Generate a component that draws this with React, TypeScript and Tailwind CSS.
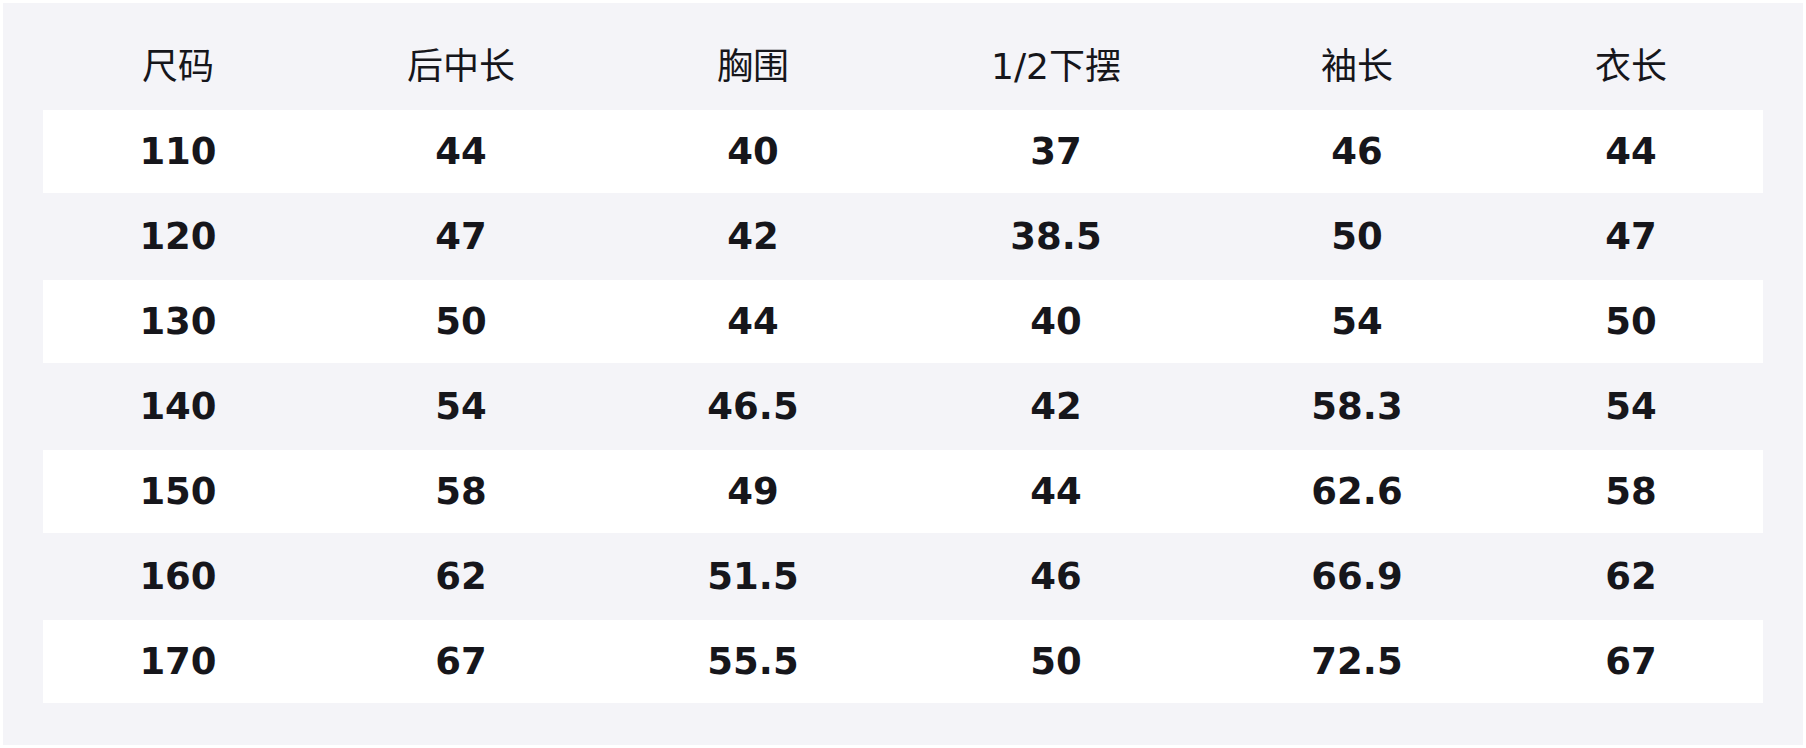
import React from "react";

const headers = ["尺码", "后中长", "胸围", "1/2下摆", "袖长", "衣长"];
const rows = [
  ["110", "44", "40", "37", "46", "44"],
  ["120", "47", "42", "38.5", "50", "47"],
  ["130", "50", "44", "40", "54", "50"],
  ["140", "54", "46.5", "42", "58.3", "54"],
  ["150", "58", "49", "44", "62.6", "58"],
  ["160", "62", "51.5", "46", "66.9", "62"],
  ["170", "67", "55.5", "50", "72.5", "67"],
];

const cols = "grid grid-cols-[270px_296px_288px_318px_284px_264px]";

export default function App() {
  return (
    <div className="w-[1806px] h-[748px] bg-white p-[3px]">
      <div
        className="w-[1800px] h-[742px] bg-[#f4f4f8] px-[40px] pb-[42px] text-[#16161b]"
        style={{ fontFamily: '"DejaVu Sans", "Noto Sans CJK SC", sans-serif' }}
      >
        <div className={`${cols} h-[107px] items-center pt-[20px]`}>
          {headers.map((h) => (
            <div key={h} className="text-center text-[36px] leading-none">
              {h}
            </div>
          ))}
        </div>
        {rows.map((r, i) => (
          <div
            key={r[0]}
            className={`${cols} items-center ${
              i % 2 === 0 ? "h-[83px] bg-white" : "h-[87px] bg-transparent"
            }`}
          >
            {r.map((c, j) => (
              <div key={j} className="text-center text-[37px] font-bold leading-none">
                {c}
              </div>
            ))}
          </div>
        ))}
      </div>
    </div>
  );
}
